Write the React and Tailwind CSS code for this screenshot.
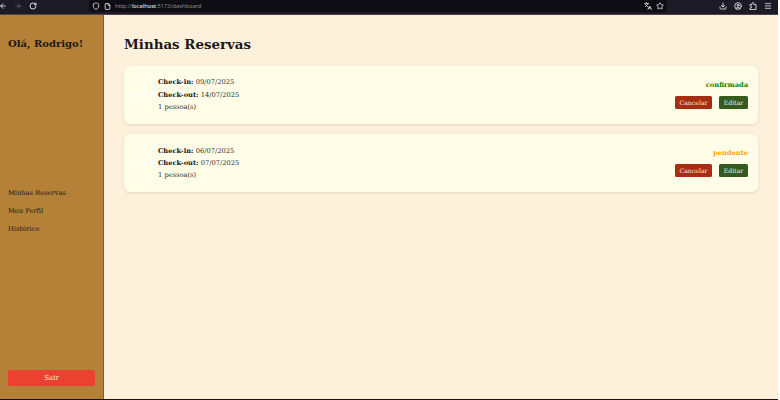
import { ArrowLeft, ArrowRight, RotateCw, Shield, File, Languages, Star, Download, CircleUser, Menu } from "lucide-react";

const reservations = [
  { checkIn: "09/07/2025", checkOut: "14/07/2025", guests: 1, status: "confirmada", color: "text-[#008a00]" },
  { checkIn: "06/07/2025", checkOut: "07/07/2025", guests: 1, status: "pendente", color: "text-[#ffa500]" },
];

function ExtensionIcon() {
  return (
    <svg viewBox="0 0 16 16" className="size-[8px]" fill="none" stroke="currentColor" strokeWidth="1.7" strokeLinejoin="round">
      <path d="M2 5h4V3.2a2 2 0 0 1 4 0V5h4v10H2v-3.2h1.5a1.8 1.8 0 0 0 0-3.6H2z" />
    </svg>
  );
}

function BrowserBar() {
  return (
    <header className="flex h-[15px] shrink-0 items-center border-b border-[#4b4651] bg-[#1c1a25] pb-[2px] text-[#e4e3e8]">
      <div className="flex w-[89px] items-center">
        <ArrowLeft className="-ml-px size-[8px]" strokeWidth={2.6} />
        <ArrowRight className="ml-[7px] size-[8px] text-[#66646e]" strokeWidth={2.4} />
        <RotateCw className="ml-[7px] size-[8px]" strokeWidth={2.8} />
      </div>
      <div className="flex h-[12px] w-[578px] items-center rounded-sm bg-[#0e0d14]">
        <Shield className="ml-[3px] size-[8px]" strokeWidth={2.4} />
        <File className="ml-[4px] size-[7px]" strokeWidth={3} />
        <span className="ml-[4px] font-['Noto_Sans',sans-serif] text-[5.7px] leading-[12px] text-[#8b8a91]">
          http://<span className="text-[#f4f4f6]">localhost</span>:5173/dashboard
        </span>
        <Languages className="ml-auto size-[8px]" strokeWidth={2.6} />
        <Star className="ml-[4px] mr-[3px] size-[8px]" strokeWidth={2.4} />
      </div>
      <div className="flex flex-1 items-center justify-end gap-[7px] pr-[6px]">
        <Download className="size-[8px]" strokeWidth={2.5} />
        <CircleUser className="size-[8px]" strokeWidth={2.6} />
        <ExtensionIcon />
        <Menu className="size-[8px]" strokeWidth={2.4} />
      </div>
    </header>
  );
}

function Sidebar() {
  return (
    <aside className="flex w-[104px] shrink-0 flex-col justify-between border-r border-[#8c561c] bg-[#b58037] px-2 pb-[13px] pt-[21px]">
      <h2 className="whitespace-nowrap text-[10px] font-bold leading-[15px]">Olá, Rodrigo!</h2>
      <nav className="flex flex-col gap-[6px] pt-px text-[6.7px] leading-[12px]">
        <a>Minhas Reservas</a>
        <a>Meu Perfil</a>
        <a>Histórico</a>
      </nav>
      <button className="h-4 w-full rounded-[2.5px] bg-[#eb4130] text-center text-[7px] leading-4 text-[#fff0dc]">Sair</button>
    </aside>
  );
}

function ReservationCard({ item }) {
  return (
    <article className="flex h-[58.4px] items-center justify-between rounded-[6px] bg-[#fffce8] pl-[10px] pr-[10px] text-[6.7px] shadow-[0_1px_3px_rgba(90,60,20,0.15)]">
      <div className="flex items-center">
        <span className="w-6 whitespace-nowrap font-bold text-[#fffffa]">Quarto</span>
        <div className="leading-[12.2px] text-[#30302b]">
          <p><strong className="text-[#171717]">Check-in:</strong> {item.checkIn}</p>
          <p><strong className="text-[#171717]">Check-out:</strong> {item.checkOut}</p>
          <p>{item.guests} pessoa(s)</p>
        </div>
      </div>
      <div className="flex flex-col items-end gap-[5px] pb-[2px]">
        <span className={`font-bold leading-[12px] ${item.color}`}>{item.status}</span>
        <div className="flex gap-[7px] text-[6.2px] text-[#f8efdf]">
          <button className="h-[13px] w-[37px] rounded-[1.5px] bg-[#a72d14] leading-[13px]">Cancelar</button>
          <button className="h-[13px] w-[29px] rounded-[1.5px] bg-[#355a20] leading-[13px]">Editar</button>
        </div>
      </div>
    </article>
  );
}

export default function App() {
  return (
    <div className="h-[400px] w-[780px] overflow-hidden bg-white">
      <div className="flex h-full w-[778px] flex-col border-b-[1.5px] border-[#17120f] bg-[#fef1dc] font-['DejaVu_Serif',serif] text-[#1a1a1a]">
        <BrowserBar />
        <div className="flex min-h-0 flex-1">
          <Sidebar />
          <main className="flex-1 pl-5 pr-5 pt-[19px]">
            <h1 className="text-[13.4px] font-bold leading-5">Minhas Reservas</h1>
            <div className="mt-[11.6px] flex flex-col gap-[10px]">
              {reservations.map((item) => <ReservationCard key={item.checkIn} item={item} />)}
            </div>
          </main>
        </div>
      </div>
    </div>
  );
}
